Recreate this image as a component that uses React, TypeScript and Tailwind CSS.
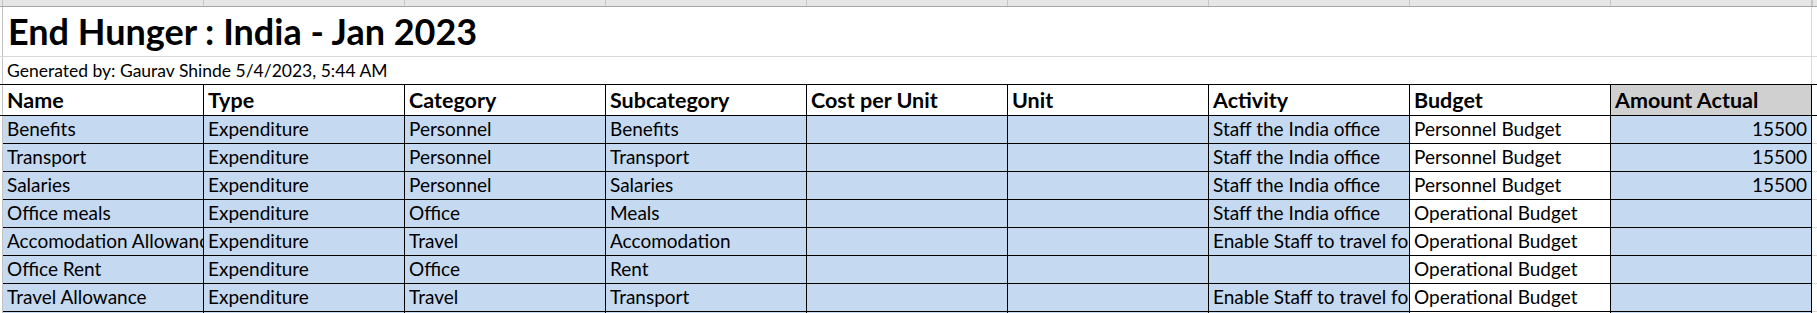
import React from 'react';

const columns = ['Name', 'Type', 'Category', 'Subcategory', 'Cost per Unit', 'Unit', 'Activity', 'Budget', 'Amount Actual'];

type Row = string[];

const rows: Row[] = [
  ['Benefits', 'Expenditure', 'Personnel', 'Benefits', '', '', 'Staff the India office', 'Personnel Budget', '15500'],
  ['Transport', 'Expenditure', 'Personnel', 'Transport', '', '', 'Staff the India office', 'Personnel Budget', '15500'],
  ['Salaries', 'Expenditure', 'Personnel', 'Salaries', '', '', 'Staff the India office', 'Personnel Budget', '15500'],
  ['Office meals', 'Expenditure', 'Office', 'Meals', '', '', 'Staff the India office', 'Operational Budget', ''],
  ['Accomodation Allowance', 'Expenditure', 'Travel', 'Accomodation', '', '', 'Enable Staff to travel for work', 'Operational Budget', ''],
  ['Office Rent', 'Expenditure', 'Office', 'Rent', '', '', '', 'Operational Budget', ''],
  ['Travel Allowance', 'Expenditure', 'Travel', 'Transport', '', '', 'Enable Staff to travel for work', 'Operational Budget', ''],
  ['', '', '', '', '', '', '', '', ''],
];

// left gutter: the edge of the row header strip
const Gutter: React.FC<{ top?: boolean }> = ({ top }) => (
  <div className={`w-[3px] shrink-0 border-r border-[#c4c4c4] ${top ? 'bg-[#e6e6e6]' : 'bg-white'}`} />
);

const App: React.FC = () => {
  return (
    <div className="w-[1817px] h-[313px] overflow-hidden bg-white text-black font-['Lato',sans-serif]">
      {/* column header strip (cut off) */}
      <div className="flex h-[7px] bg-[#e6e6e6] border-b border-[#a6a6a6]">
        <Gutter top />
        {columns.map((c) => (
          <div key={c} className="w-[201px] shrink-0 border-r border-[#c6c6c6]" />
        ))}
        <div className="flex-1 border-l border-[#c6c6c6]" />
      </div>

      {/* title */}
      <div className="flex h-[50px] border-b border-[#d9d9d9]">
        <Gutter />
        <div className="w-[1809px] shrink-0 border-r border-[#d9d9d9] flex items-end pl-[5px] pb-[7px]">
          <h1 className="text-[36px] font-bold leading-none whitespace-nowrap">End Hunger : India - Jan 2023</h1>
        </div>
        <div className="flex-1" />
      </div>

      {/* generated by */}
      <div className="flex h-[27px]">
        <Gutter />
        <div className="w-[1809px] shrink-0 border-r border-[#d9d9d9] flex items-end pl-[4px] pb-[5px]">
          <p className="text-[17.5px] leading-none whitespace-nowrap">Generated by: Gaurav Shinde 5/4/2023, 5:44 AM</p>
        </div>
        <div className="flex-1" />
      </div>

      {/* table header */}
      <div className="flex h-[32px] border-y border-black">
        <Gutter />
        {columns.map((c, i) => (
          <div
            key={c}
            className={`w-[201px] shrink-0 border-r border-black flex items-end pl-[4px] pb-[4px] ${
              i === 8 ? 'bg-[#d0d0d0]' : 'bg-white'
            }`}
          >
            <span className="text-[21.5px] font-bold leading-none whitespace-nowrap">{c}</span>
          </div>
        ))}
        <div className="flex-1 bg-white" />
      </div>

      {/* data rows */}
      {rows.map((r, ri) => (
        <div key={ri} className="flex h-[28px]">
          <Gutter />
          {r.map((v, ci) => (
            <div
              key={ci}
              className={`w-[201px] shrink-0 border-r border-b border-black flex items-end pb-[2px] overflow-hidden ${
                ci === 7 ? 'bg-white' : 'bg-[#c5d9f1]'
              } ${ci === 8 ? 'pr-[4px]' : 'pl-[4px]'}`}
            >
              <span
                className={`block w-full overflow-hidden text-[19px] leading-[1.25] whitespace-nowrap ${
                  ci === 8 ? 'text-right' : 'text-left'
                }`}
              >
                {v}
              </span>
            </div>
          ))}
          <div className="flex-1 border-b border-[#d9d9d9]" />
        </div>
      ))}
    </div>
  );
};

export default App;
